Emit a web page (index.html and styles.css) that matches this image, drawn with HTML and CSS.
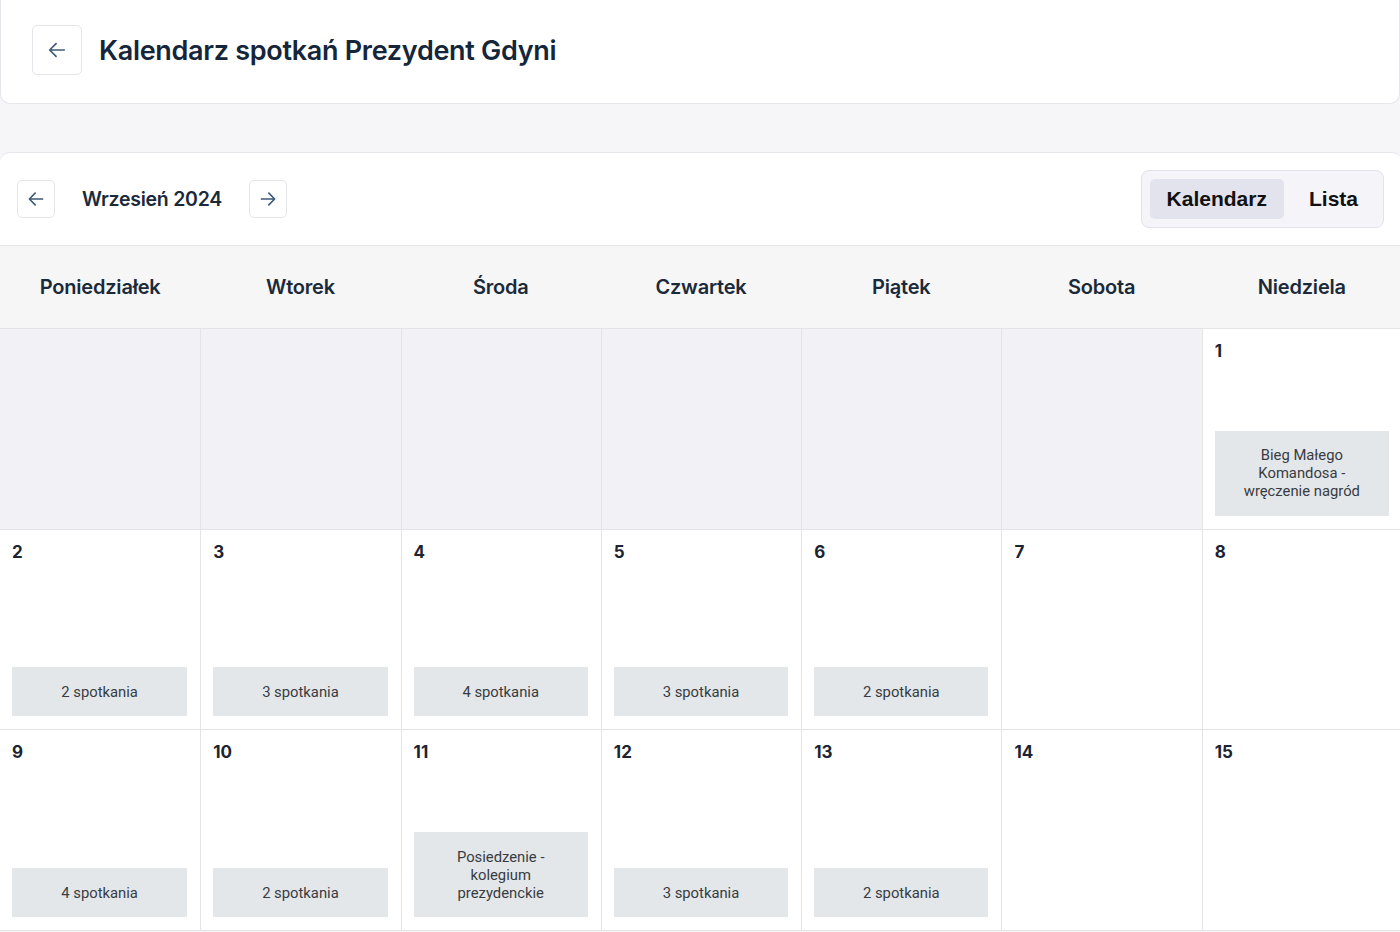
FILE: index.html
```html
<!DOCTYPE html>
<html lang="pl">
<head>
<meta charset="utf-8">
<title>Kalendarz spotkań Prezydent Gdyni</title>
<link rel="stylesheet" href="styles.css">
</head>
<body>
<header class="page-header">
  <button class="icon-btn icon-btn--lg" aria-label="Wstecz">
    <svg width="22" height="22" viewBox="0 0 24 24" fill="none" stroke="currentColor" stroke-width="1.8" stroke-linecap="round" stroke-linejoin="round"><path d="M20 12H4M11 5l-7 7 7 7"/></svg>
  </button>
  <h1 class="page-title">Kalendarz spotkań Prezydent Gdyni</h1>
</header>

<main class="calendar">
  <div class="toolbar">
    <div class="month-nav">
      <button class="icon-btn" aria-label="Poprzedni miesiąc">
        <svg width="20" height="20" viewBox="0 0 24 24" fill="none" stroke="currentColor" stroke-width="1.9" stroke-linecap="round" stroke-linejoin="round"><path d="M20 12H4M11 5l-7 7 7 7"/></svg>
      </button>
      <span class="month-label">Wrzesień 2024</span>
      <button class="icon-btn" aria-label="Następny miesiąc">
        <svg width="20" height="20" viewBox="0 0 24 24" fill="none" stroke="currentColor" stroke-width="1.9" stroke-linecap="round" stroke-linejoin="round"><path d="M4 12h16M13 5l7 7-7 7"/></svg>
      </button>
    </div>
    <div class="view-switch">
      <button class="view-btn view-btn--active">Kalendarz</button>
      <button class="view-btn">Lista</button>
    </div>
  </div>

  <div class="weekdays">
    <div class="weekday">Poniedziałek</div>
    <div class="weekday">Wtorek</div>
    <div class="weekday">Środa</div>
    <div class="weekday">Czwartek</div>
    <div class="weekday">Piątek</div>
    <div class="weekday">Sobota</div>
    <div class="weekday">Niedziela</div>
  </div>

  <div class="grid">
    <div class="cell cell--empty"></div>
    <div class="cell cell--empty"></div>
    <div class="cell cell--empty"></div>
    <div class="cell cell--empty"></div>
    <div class="cell cell--empty"></div>
    <div class="cell cell--empty"></div>
    <div class="cell"><span class="day">1</span><div class="event">Bieg Małego Komandosa - wręczenie nagród</div></div>

    <div class="cell"><span class="day">2</span><div class="event">2 spotkania</div></div>
    <div class="cell"><span class="day">3</span><div class="event">3 spotkania</div></div>
    <div class="cell"><span class="day">4</span><div class="event">4 spotkania</div></div>
    <div class="cell"><span class="day">5</span><div class="event">3 spotkania</div></div>
    <div class="cell"><span class="day">6</span><div class="event">2 spotkania</div></div>
    <div class="cell"><span class="day">7</span></div>
    <div class="cell"><span class="day">8</span></div>

    <div class="cell"><span class="day">9</span><div class="event">4 spotkania</div></div>
    <div class="cell"><span class="day">10</span><div class="event">2 spotkania</div></div>
    <div class="cell"><span class="day">11</span><div class="event">Posiedzenie - kolegium prezydenckie</div></div>
    <div class="cell"><span class="day">12</span><div class="event">3 spotkania</div></div>
    <div class="cell"><span class="day">13</span><div class="event">2 spotkania</div></div>
    <div class="cell"><span class="day">14</span></div>
    <div class="cell"><span class="day">15</span></div>
  </div>
</main>
</body>
</html>
```

FILE: styles.css
```css
* { box-sizing: border-box; }

html, body {
  margin: 0;
  padding: 0;
}

body {
  background: #f6f6f9;
  font-family: Inter, Roboto, "Liberation Sans", sans-serif;
  color: #1b2a3a;
  height: 932px;
  overflow: hidden;
}

button {
  font-family: inherit;
  cursor: pointer;
}

.page-header {
  width: 1400px;
  height: 104px;
  background: #fff;
  border: 1px solid #e4e6ea;
  border-top: none;
  border-radius: 0 0 10px 10px;
  display: flex;
  align-items: center;
  padding: 0 0 3px 31px;
  gap: 17px;
}

.icon-btn {
  width: 38px;
  height: 38px;
  border: 1px solid #e3e5e9;
  border-radius: 5px;
  background: #fff;
  color: #3e5877;
  display: flex;
  align-items: center;
  justify-content: center;
  padding: 0;
}

.icon-btn--lg {
  width: 50px;
  height: 50px;
}

.page-title {
  margin: 0;
  font-size: 27px;
  font-weight: 600;
  letter-spacing: -0.3px;
  color: #15263a;
}

.calendar {
  width: 1402px;
  margin-top: 48px;
  background: #fff;
  border-top: 1px solid #e4e6ea;
  border-radius: 10px 10px 0 0;
}

.toolbar {
  width: 1400px;
  height: 93px;
  display: flex;
  align-items: center;
  justify-content: space-between;
  padding: 0 16px 0 17px;
  border-bottom: 1px solid #e4e4e6;
}

.month-nav {
  display: flex;
  align-items: center;
  gap: 27px;
}

.month-label {
  font-size: 19.5px;
  font-weight: 600;
  color: #1b2a3a;
  letter-spacing: -0.25px;
}

.view-switch {
  display: flex;
  align-items: center;
  gap: 8px;
  padding: 8px 8px;
  background: #f4f4f9;
  border: 1px solid #e2e3ea;
  border-radius: 8px;
}

.view-btn {
  border: none;
  background: transparent;
  font-family: "Liberation Sans", Arial, sans-serif;
  font-size: 21px;
  font-weight: 700;
  color: #111;
  height: 40px;
  padding: 0 17px;
  border-radius: 5px;
}

.view-btn--active {
  background: #e2e3ed;
}

.weekdays {
  height: 83px;
  background: #f6f6f6;
  display: grid;
  grid-template-columns: repeat(7, 1fr);
  align-items: center;
  border-bottom: 1px solid #e4e4e6;
}

.weekday {
  text-align: center;
  font-size: 20px;
  font-weight: 600;
  color: #1b2a3a;
  letter-spacing: -0.2px;
}

.grid {
  display: grid;
  grid-template-columns: repeat(7, 1fr);
  grid-auto-rows: 200.7px;
}

.cell {
  border-left: 1px solid #e4e4e6;
  border-bottom: 1px solid #e4e4e6;
  padding: 12px 13px 13px 12px;
  display: flex;
  flex-direction: column;
  justify-content: space-between;
  background: #fff;
}

.cell:nth-child(7n+1) {
  border-left: none;
  padding-left: 12px;
}

.cell--empty {
  background: #f1f1f6;
}

.day {
  font-size: 17px;
  font-weight: 700;
  color: #1b2430;
  line-height: 20px;
}

.event {
  background: #e4e7ea;
  color: #373c42;
  font-family: Roboto, "Liberation Sans", sans-serif;
  font-size: 14.8px;
  line-height: 18px;
  text-align: center;
  padding: 15.5px 22px;
}
```
